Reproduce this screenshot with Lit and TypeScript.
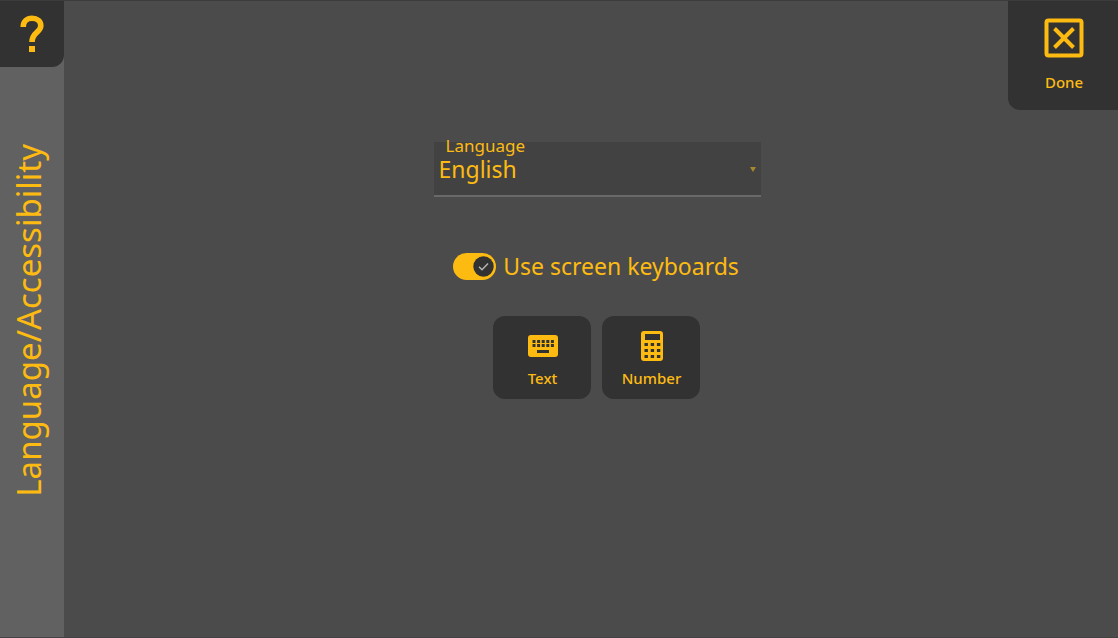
import { LitElement, html, css } from "lit";
import { customElement, state } from "lit/decorators.js";

@customElement("app-root")
export class AppRoot extends LitElement {
  @state() private screenKeyboards = true;

  static styles = css`
    :host {
      display: grid;
      grid-template-columns: 64px 1fr;
      min-height: 100vh;
      box-sizing: border-box;
      background: #4b4b4b;
      border-top: 1px solid #3c3c3c;
      border-bottom: 1px solid #434343;
      color: #fdbb12;
      font-family: "Noto Sans", "Open Sans", sans-serif;
      font-size: 23px;
    }
    button {
      border: 0;
      padding: 0;
      background: #323232;
      color: inherit;
      font: inherit;
      cursor: pointer;
    }
    svg {
      display: block;
    }
    .rail {
      display: flex;
      flex-direction: column;
      align-items: center;
      gap: 77px;
      background: #616161;
      box-sizing: border-box;
    }
    .help {
      display: grid;
      place-items: center;
      align-self: stretch;
      height: 66px;
      border-radius: 0 0 12px 0;
    }
    .title {
      margin: 0 6px 0 0;
      font-size: 33px;
      line-height: 44px;
      font-weight: 400;
      white-space: nowrap;
      writing-mode: vertical-rl;
      transform: rotate(180deg);
    }
    .main {
      display: flex;
      flex-direction: column;
    }
    .done {
      display: flex;
      flex-direction: column;
      align-items: center;
      gap: 12px;
      align-self: flex-end;
      box-sizing: border-box;
      width: 110px;
      height: 109px;
      padding: 17px 0 0 2px;
      border-radius: 0 0 0 12px;
    }
    .caption {
      font-size: 15px;
      font-weight: 500;
      line-height: 24px;
    }
    .form {
      display: flex;
      flex-direction: column;
      align-items: center;
      padding: 32px 0 32px 12px;
    }
    .field {
      position: relative;
      width: 327px;
      max-width: 100%;
    }
    .field label {
      position: absolute;
      left: 12px;
      top: -8px;
      font-size: 17px;
      line-height: 24px;
    }
    .field select {
      display: block;
      appearance: none;
      box-sizing: border-box;
      width: 100%;
      height: 55px;
      margin: 0;
      padding: 0 24px 0 5px;
      border: 0;
      border-bottom: 2px solid #696969;
      border-radius: 0;
      background: #424242;
      color: inherit;
      font: inherit;
    }
    .arrow {
      position: absolute;
      right: 5px;
      top: 25px;
      pointer-events: none;
    }
    .toggle {
      display: flex;
      align-items: center;
      gap: 7px;
      margin: 52px 2px 0 0;
      line-height: 34px;
    }
    .switch {
      display: grid;
      width: 43px;
      height: 27px;
    }
    .switch > * {
      grid-area: 1 / 1;
    }
    .switch input {
      appearance: none;
      width: 43px;
      height: 27px;
      margin: 0;
      border-radius: 14px;
      background: #323232;
      cursor: pointer;
    }
    .switch input:checked {
      background: #fdbb12;
    }
    .knob {
      align-self: center;
      margin-left: 3px;
      pointer-events: none;
    }
    .switch input:checked + .knob {
      margin-left: 20px;
    }
    .keyboards {
      display: flex;
      gap: 11px;
      margin: 33px 2px 0 0;
    }
    .key {
      display: flex;
      flex-direction: column;
      align-items: center;
      box-sizing: border-box;
      width: 98px;
      height: 83px;
      padding: 14px 0 0 2px;
      gap: 4px;
      border-radius: 12px;
    }
  `;

  render() {
    return html`
      <aside class="rail">
        <button class="help" aria-label="Help">
          <svg width="24" height="40" viewBox="0 0 24 40" fill="none">
            <path d="M3.2 13C3.2 7.5 7 4.3 12 4.3C17.3 4.3 20.8 7.5 20.8 11.8C20.8 18.5 12 18 12 28" stroke="#fdbb12" stroke-width="5.6" />
            <path d="M9 32H15V38H9Z" fill="#fdbb12" />
          </svg>
        </button>
        <h1 class="title">Language/Accessibility</h1>
      </aside>
      <main class="main">
        <button class="done">
          <svg width="40" height="40" viewBox="0 0 40 40" fill="none" stroke="#fdbb12" stroke-width="4">
            <rect x="2.5" y="2.5" width="35" height="35" rx="2" />
            <path d="M10.5 10.5L29.5 29.5M29.5 10.5L10.5 29.5" />
          </svg>
          <span class="caption">Done</span>
        </button>
        <div class="form">
          <div class="field">
            <select id="language">
              <option>English</option>
            </select>
            <label for="language">Language</label>
            <svg class="arrow" width="6" height="5" viewBox="0 0 6 5"><path d="M0 0H6L3 5Z" fill="#a48a2c" /></svg>
          </div>
          <div class="toggle">
            <span class="switch">
              <input
                id="screen-keyboards"
                type="checkbox"
                role="switch"
                .checked=${this.screenKeyboards}
                @change=${(e: Event) => (this.screenKeyboards = (e.target as HTMLInputElement).checked)}
              />
              <svg class="knob" width="21" height="21" viewBox="0 0 21 21" fill="none">
                <circle cx="10.5" cy="10.5" r="10.2" fill="#323232" />
                <path d="M6 10.8L9 13.8L15 7.6" stroke="#b4b4b4" stroke-width="1.5" />
              </svg>
            </span>
            <label for="screen-keyboards">Use screen keyboards</label>
          </div>
          <div class="keyboards">
            <button class="key">
              <svg width="32" height="32" viewBox="0 0 32 32">
                <rect x="1" y="5" width="30" height="22" rx="3" fill="#fdbb12" />
                <path
                  d="M5.5 11.5H27M5.5 15.5H27"
                  stroke="#323232" stroke-width="3" stroke-dasharray="3 1.6" />
                <path d="M10 21.5H22" stroke="#323232" stroke-width="3" />
              </svg>
              <span class="caption">Text</span>
            </button>
            <button class="key">
              <svg width="32" height="32" viewBox="0 0 32 32">
                <rect x="5" y="1" width="22" height="30" rx="3" fill="#fdbb12" />
                <path d="M9 4H24V10H9Z" fill="#323232" />
                <path
                  d="M8.5 14.5H24.5M8.5 20.5H24.5M8.5 26.5H24.5"
                  stroke="#323232" stroke-width="3.2" stroke-dasharray="3.4 2.8" />
              </svg>
              <span class="caption">Number</span>
            </button>
          </div>
        </div>
      </main>
    `;
  }
}
